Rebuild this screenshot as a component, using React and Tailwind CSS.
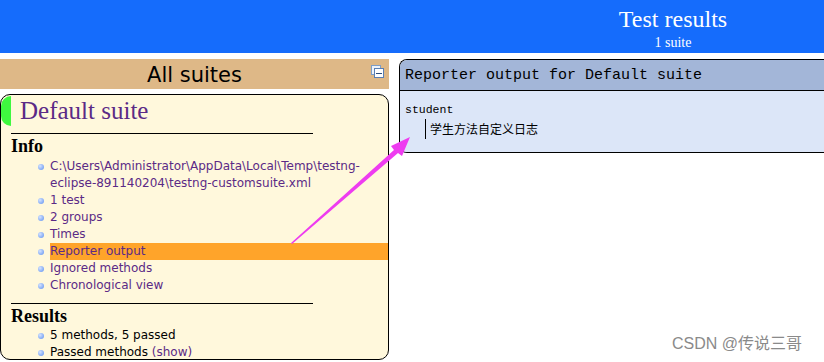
import React from "react";

const infoItems = [
  { label: "C:\\Users\\Administrator\\AppData\\Local\\Temp\\testng-eclipse-891140204\\testng-customsuite.xml" },
  { label: "1 test" },
  { label: "2 groups" },
  { label: "Times" },
  { label: "Reporter output", active: true },
  { label: "Ignored methods" },
  { label: "Chronological view" },
];

const Bullet = () => (
  <span className="absolute left-[-12px] top-[6px] w-[6px] h-[6px] rounded-full bg-[radial-gradient(circle_at_35%_35%,#d4e3ff,#5b8ef0)]" />
);

const Item = ({ children, active, purple = true }) => (
  <li className="relative">
    <Bullet />
    <span className={`block pr-1 ${active ? "bg-[#ffa42a]" : ""} ${purple ? "text-[#5b2a86]" : "text-black"}`}>
      {children}
    </span>
  </li>
);

export default function App() {
  return (
    <div className="relative w-[824px] h-[362px] bg-white overflow-hidden font-['DejaVu_Sans',sans-serif]">
      {/* Header */}
      <div className="h-[53px] bg-[#156cfc] flex">
        <div className="w-[522px]" />
        <div className="w-[302px] flex flex-col items-center text-white font-['Liberation_Serif',serif]">
          <div className="text-[24px] leading-[28px] mt-[5px]">Test results</div>
          <div className="text-[14px] leading-[16px] mt-[2px]">1 suite</div>
        </div>
      </div>

      <div className="flex mt-[6px]">
        {/* Left panel */}
        <div className="w-[389px] shrink-0">
          <div className="relative h-[30px] bg-[#deb887] flex items-center justify-center pt-[3px] text-[21px] text-black">
            All suites
            <span className="absolute right-[5px] top-[6px] w-[13px] h-[13px]">
              <span className="absolute left-0 top-0 w-[10px] h-[10px] border border-[#7d9ec8] bg-[#eef3fa]" />
              <span className="absolute left-[3px] top-[3px] w-[10px] h-[10px] border border-[#5a7fb3] bg-white flex items-center justify-center">
                <span className="w-[6px] h-[1px] bg-[#2a4d80]" />
              </span>
            </span>
          </div>

          <div className="mt-[5px] h-[266px] bg-[#fff8dc] border border-black rounded-[10px] overflow-hidden">
            <div className="flex items-center h-[31px]">
              <div className="w-[10px] h-[30px] bg-[#3ff83f] rounded-l-[10px]" />
              <div className="ml-[9px] text-[25px] leading-[30px] text-[#5b2a86] font-['Liberation_Serif',serif]">Default suite</div>
            </div>

            <div className="ml-[10px] w-[302px] h-[1px] bg-black mt-[7px]" />
            <div className="ml-[10px] text-[18px] leading-[22px] font-bold font-['Liberation_Serif',serif] mt-[1px]">Info</div>
            <ul className="pl-[49px] mt-[1px] text-[12px] leading-[17px]">
              {infoItems.map((it) => (
                <Item key={it.label} active={it.active}>{it.label}</Item>
              ))}
            </ul>

            <div className="ml-[10px] w-[302px] h-[1px] bg-black mt-[9px]" />
            <div className="ml-[10px] text-[18px] leading-[22px] font-bold font-['Liberation_Serif',serif] mt-[1px]">Results</div>
            <ul className="pl-[49px] text-[12px] leading-[17px]">
              <Item purple={false}>5 methods, 5 passed</Item>
              <Item purple={false}>
                Passed methods <span className="text-[#5b2a86]">(show)</span>
              </Item>
            </ul>
          </div>
        </div>

        {/* Right panel */}
        <div className="ml-[10px] flex-1">
          <div className="border border-black border-r-0 rounded-l-[8px] overflow-hidden">
            <div className="h-[31px] bg-[#a3b6d8] border-b border-black flex items-center pt-[2px] px-[5px] text-[15px] text-black font-['Liberation_Mono',monospace]">
              Reporter output for Default suite
            </div>
            <div className="h-[61px] bg-[#dce6f8] px-[5px] pt-[11px] text-[11.5px] font-['Liberation_Mono',monospace]">
              <div className="leading-[16px]">student</div>
              <div className="ml-[20px] mt-[1px] border-l border-black pl-[4px] leading-[20px] text-[12px] font-['Noto_Sans_CJK_SC',sans-serif]">
                学生方法自定义日志
              </div>
            </div>
          </div>
        </div>
      </div>

      {/* Annotation arrow */}
      <svg className="absolute left-0 top-0 pointer-events-none" width="824" height="362">
        <polygon points="291,243 394,150 391,146 410,137 402,156 398,153 292,244" fill="#ee3cf0" />
      </svg>

      {/* Watermark */}
      <div className="absolute left-[672px] top-[333px] text-[16px] leading-[22px] text-[#8a8a8a] font-['Liberation_Sans','Noto_Sans_CJK_SC',sans-serif]">
        CSDN @传说三哥
      </div>
    </div>
  );
}
